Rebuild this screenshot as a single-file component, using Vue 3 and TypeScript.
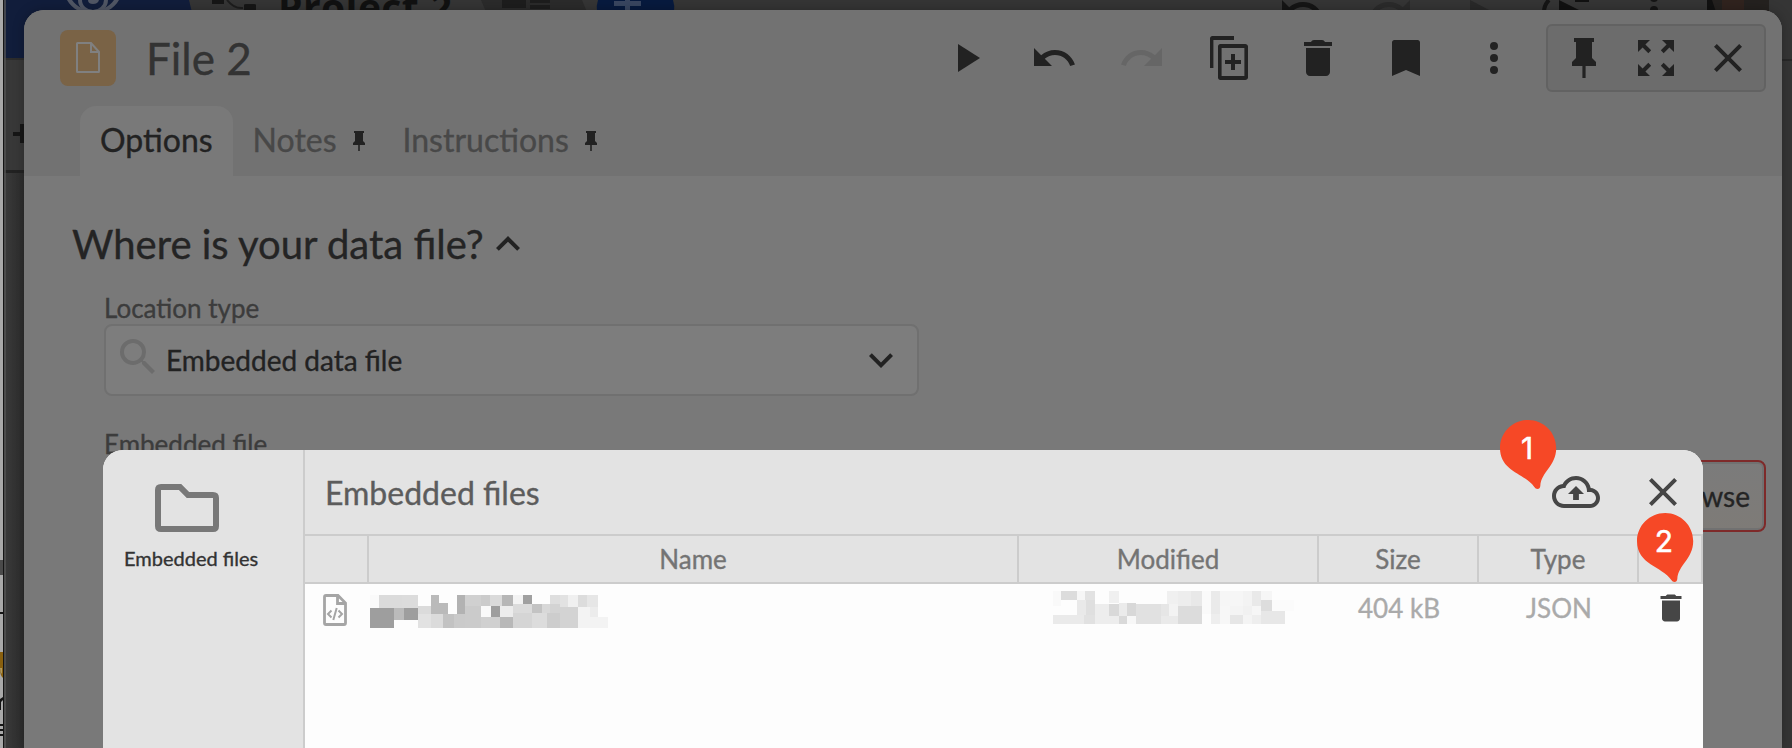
<script setup lang="ts">
import { reactive } from 'vue';

interface Icon {
  name: string;
  path: string;
  disabled?: boolean;
}

interface Tab {
  label: string;
  pinned: boolean;
}

// x, y, width, height, grey level
type Block = [number, number, number, number, number];

const pinPath = 'M16 12V4h1V2H7v2h1v8l-2 2v2h5.2v6h1.6v-6H18v-2z';
const closePath = 'M19 6.41L17.59 5 12 10.59 6.41 5 5 6.41 10.59 12 5 17.59 6.41 19 12 13.41 17.59 19 19 17.59 13.41 12z';
const deletePath = 'M6 19c0 1.1.9 2 2 2h8c1.1 0 2-.9 2-2V7H6v12zM19 4h-3.5c-.3-.6-.8-1-1.5-1h-4c-.7 0-1.2.4-1.5 1H5v2h14V4z';
const undoPath = 'M12.5 8c-2.65 0-5.05.99-6.9 2.6L2 7v9h9l-3.62-3.62c1.39-1.16 3.16-1.88 5.12-1.88 3.54 0 6.55 2.31 7.6 5.5l2.37-.78C21.08 11.03 17.15 8 12.5 8z';
const redoPath = 'M18.4 10.6C16.55 8.99 14.15 8 11.5 8c-4.65 0-8.58 3.03-9.96 7.22L3.9 16c1.05-3.19 4.05-5.5 7.6-5.5 1.95 0 3.73.72 5.12 1.88L13 16h9V7l-3.6 3.6z';
const cloudPath = 'M19.35 10.04C18.67 6.59 15.64 4 12 4 9.11 4 6.6 5.64 5.35 8.04 2.34 8.36 0 10.91 0 14c0 3.31 2.69 6 6 6h13c2.76 0 5-2.24 5-5 0-2.64-2.05-4.78-4.65-4.96zM19 18H6c-2.21 0-4-1.79-4-4s1.79-4 4-4h.71C7.37 7.69 9.48 6 12 6c3.04 0 5.5 2.46 5.5 5.5v.5H19c1.66 0 3 1.34 3 3s-1.34 3-3 3zM8 13h2.55v3h2.9v-3H16l-4-4z';

const actions: Icon[] = [
  { name: 'run', path: 'M8 5v14l11-7z' },
  { name: 'undo', path: undoPath },
  { name: 'redo', path: redoPath, disabled: true },
  { name: 'duplicate', path: 'M14 1H3.2C2.5 1 2 1.5 2 2.2V17h1.7V3H14V1zM19.6 5H7.2C6.5 5 6 5.5 6 6.2v15.6c0 .7.5 1.2 1.2 1.2h12.4c.7 0 1.4-.5 1.4-1.2V6.2C21 5.5 20.3 5 19.6 5zM19.2 21H7.8V7h11.4v14zM12.5 10h2v3h3v2h-3v3h-2v-3h-3v-2h3z' },
  { name: 'delete', path: deletePath },
  { name: 'bookmark', path: 'M17.8 3H6.2C5.5 3 5 3.5 5 4.2V21l7-3 7 3V4.2c0-.7-.5-1.2-1.2-1.2z' },
  { name: 'more', path: 'M12 8a2 2 0 1 0 0-4 2 2 0 0 0 0 4zm0 2a2 2 0 1 0 0 4 2 2 0 0 0 0-4zm0 6a2 2 0 1 0 0 4 2 2 0 0 0 0-4z' },
];

const windowActions: Icon[] = [
  { name: 'pin', path: pinPath },
  { name: 'expand', path: 'M15 3l2.3 2.3-2.89 2.87 1.42 1.42L18.7 6.7 21 9V3zM3 9l2.3-2.3 2.87 2.89 1.42-1.42L6.7 5.3 9 3H3zm6 12l-2.3-2.3 2.89-2.87-1.42-1.42L5.3 17.3 3 15v6zm12-6l-2.3 2.3-2.87-2.89-1.42 1.42 2.89 2.87L15 21h6z' },
  { name: 'close', path: closePath },
];

const tabs: Tab[] = [
  { label: 'Options', pinned: false },
  { label: 'Notes', pinned: true },
  { label: 'Instructions', pinned: true },
];

const columns = ['', 'Name', 'Modified', 'Size', 'Type', ''];

const state = reactive({ tab: 'Options', location: 'Embedded data file' });

const nameBlocks: Block[] = [
  [0, 0, 9, 13, 250], [9, 0, 23, 13, 219], [32, 0, 16, 13, 220], [0, 13, 24, 20, 158], [24, 13, 10, 12, 187], [34, 13, 14, 12, 158],
  [48, 11, 13, 8, 219], [48, 19, 13, 14, 226], [61, 0, 8, 19, 186], [69, 8, 9, 11, 186], [61, 19, 12, 14, 219],
  [73, 19, 11, 14, 194], [84, 19, 11, 14, 202], [87, 0, 8, 19, 178], [95, 0, 16, 11, 208], [95, 11, 16, 22, 203],
  [111, 0, 9, 11, 203], [120, 0, 12, 11, 218], [132, 0, 11, 11, 182], [111, 11, 10, 11, 249], [121, 11, 9, 11, 158],
  [130, 11, 13, 11, 236], [111, 22, 19, 11, 208], [130, 22, 13, 11, 184], [143, 0, 10, 9, 243], [153, 0, 9, 9, 160],
  [143, 9, 19, 9, 219], [162, 9, 10, 9, 195], [172, 9, 8, 9, 216], [143, 18, 19, 15, 213], [162, 18, 15, 15, 220],
  [177, 18, 13, 15, 205], [180, 0, 10, 9, 222], [190, 0, 8, 12, 226], [180, 9, 10, 9, 211], [198, 0, 10, 12, 240],
  [190, 12, 18, 21, 211], [208, 0, 9, 12, 220], [217, 0, 11, 12, 230], [208, 12, 12, 21, 243], [220, 12, 8, 10, 236],
  [220, 22, 18, 11, 243],
];

const dateBlocks: Block[] = [
  [0, 0, 8, 15, 249], [8, 0, 16, 9, 220], [24, 0, 8, 9, 246], [32, 0, 10, 9, 226], [24, 9, 9, 15, 233], [33, 9, 9, 15, 223],
  [0, 24, 31, 9, 234], [31, 24, 11, 9, 225], [42, 13, 14, 20, 237], [56, 0, 10, 12, 240], [56, 13, 10, 12, 217],
  [56, 25, 10, 8, 237], [66, 12, 8, 13, 235], [66, 25, 8, 8, 217], [74, 12, 9, 13, 216], [74, 25, 9, 8, 247],
  [83, 13, 25, 20, 225], [108, 13, 8, 12, 230], [116, 13, 9, 12, 243], [108, 25, 17, 8, 234], [114, 0, 11, 13, 240],
  [125, 0, 13, 15, 237], [138, 0, 11, 15, 232], [125, 15, 24, 18, 220], [149, 0, 9, 23, 250], [158, 0, 9, 23, 234],
  [158, 23, 9, 10, 238], [167, 0, 23, 15, 246], [167, 15, 10, 18, 247], [190, 0, 9, 15, 243], [177, 15, 13, 9, 244],
  [177, 24, 13, 9, 230], [190, 15, 9, 9, 241], [190, 24, 9, 9, 244], [199, 0, 9, 15, 233], [208, 0, 11, 9, 246],
  [199, 15, 9, 9, 246], [199, 24, 9, 9, 238], [208, 9, 11, 11, 221], [219, 9, 22, 11, 251], [208, 20, 24, 13, 231],
];

const fill = (grey: number) => `rgb(${grey}, ${grey}, ${grey})`;
</script>

<template>
  <div class="screen">
    <!-- dimmed project window behind the editor -->
    <svg class="backdrop" width="1792" height="748" viewBox="0 0 1792 748">
      <defs>
        <linearGradient id="rail" x1="0" x2="1" y1="0" y2="0">
          <stop offset="0" stop-color="#393939" />
          <stop offset="1" stop-color="#2d2d2d" />
        </linearGradient>
      </defs>
      <rect width="1792" height="748" fill="#353535" />
      <path d="M4 0H189L203 58H4z" fill="#111d3b" />
      <path d="M4 58h22v2H4z" fill="#2c2c2c" />
      <rect x="4" y="60" width="20" height="110" fill="#383838" />
      <rect x="4" y="170" width="20" height="3" fill="#222" />
      <rect x="5" y="173" width="19" height="575" fill="url(#rail)" />
      <path d="M13 132h7v-8h4v19h-4v-7h-7z" fill="#161616" />
      <path d="M67 0c5 9 15 14 26 14s21-5 26-14h-5c-5 7-12 10-21 10S77 7 72 0z" fill="#515765" />
      <path d="M80 0a13 12 0 0 0 26 0" fill="none" stroke="#515765" stroke-width="4" />
      <path d="M88 0h11q-1 4-6 4t-5-4z" fill="#515765" />
      <path d="M212 0h12v4h-12zM244 5q0-1 2-1h8q2 0 2 1v6h-12z" fill="#161616" />
      <path d="M227 0q7 9 16 8" fill="none" stroke="#1d1d1d" stroke-width="2" />
      <text x="278" y="22" class="project" textLength="174">Project 2</text>
      <path d="M481 0h101l5 12H486z" fill="#2b2b2b" />
      <path d="M502 0h24v8h-24zM530 0h20v3h-20zM530 5h20v4h-20z" fill="#1d1d1d" />
      <path d="M597 12q-1-6 1-12h75q2 6 1 12z" fill="#071a3e" />
      <path d="M614 1h27v5h-27zM625 0h5v12h-5z" fill="#394660" />
      <svg x="1278" y="-14" width="48" height="48" viewBox="0 0 24 24"><path :d="undoPath" fill="#151515" /></svg>
      <svg x="1366" y="-14" width="48" height="48" viewBox="0 0 24 24"><path :d="redoPath" fill="#2b2b2b" /></svg>
      <path d="M1470 0l21 11h-21z" fill="#292929" />
      <path d="M1544 12q0-7 5-12" fill="none" stroke="#151515" stroke-width="4" />
      <path d="M1559 0l20 10h-20zM1575 0h14v2h-14z" fill="#111" />
      <circle cx="1654" cy="-2" r="4" fill="#151515" />
      <circle cx="1654" cy="10" r="4" fill="#151515" />
      <path d="M1707 0h62v12h-62z" fill="#24211f" />
      <path d="M1722 0h22v12h-22z" fill="#30231e" />
      <path d="M1707 0h5l4 12h-9z" fill="#111" />
      <path d="M1782 59h10v2h-10z" fill="#282828" />
      <path d="M0 0h3v748H0z" fill="#a9a9a9" />
      <path d="M3 0h1v748H3z" fill="#151515" />
      <path d="M4 0h2v748H4z" fill="#555" fill-opacity=".7" />
      <path d="M0 560h3v15H0z" fill="#4a4a4a" />
      <path d="M0 612h3v2H0z" fill="#151515" />
      <path d="M0 652h3v26q-3-3-3-8z" fill="#89600f" />
      <path d="M0 668h2v6q-2-2-2-6z" fill="#b09a60" />
      <path d="M0 699l3-2v3l-2 2v8H0zM0 724h3v2H0zM0 729h3v2H0zM0 734h3v2H0z" fill="#151515" />
    </svg>

    <section class="editor">
      <header class="editor-head">
        <div class="title-bar">
          <div class="file-badge">
            <svg width="28" height="34" viewBox="0 0 28 34">
              <path d="M3.5 2H17l8 9v19.5q0 .5-.5.5h-21q-.5 0-.5-.5v-28q0-.5.5-.5zM17 2v9h8" fill="none" stroke="#808080" stroke-width="2" />
            </svg>
          </div>
          <h1>File 2</h1>
          <div class="actions">
            <button v-for="a in actions" :key="a.name" :class="{ disabled: a.disabled }" :aria-label="a.name">
              <svg viewBox="0 0 24 24"><path :d="a.path" /></svg>
            </button>
          </div>
          <div class="window-actions">
            <button v-for="a in windowActions" :key="a.name" :aria-label="a.name">
              <svg viewBox="0 0 24 24"><path :d="a.path" /></svg>
            </button>
          </div>
        </div>
        <nav class="tabs">
          <div v-for="t in tabs" :key="t.label" class="tab" :class="{ active: t.label === state.tab }" @click="state.tab = t.label">
            <span>{{ t.label }}</span>
            <svg v-if="t.pinned" viewBox="0 0 24 24"><path :d="pinPath" /></svg>
          </div>
        </nav>
      </header>

      <div class="editor-body">
        <h2>
          <span>Where is your data file?</span>
          <svg viewBox="0 0 24 24"><path d="M12 8l-6 6 1.41 1.41L12 10.83l4.59 4.58L18 14z" /></svg>
        </h2>
        <label>Location type</label>
        <div class="select">
          <svg class="search" viewBox="0 0 24 24">
            <path d="M15.5 14h-.79l-.28-.27A6.471 6.471 0 0 0 16 9.5 6.5 6.5 0 1 0 9.5 16c1.61 0 3.09-.59 4.23-1.57l.27.28v.79l5 4.99L20.49 19l-4.99-5zm-6 0C7.01 14 5 11.99 5 9.5S7.01 5 9.5 5 14 7.01 14 9.5 11.99 14 9.5 14z" />
          </svg>
          <span>{{ state.location }}</span>
          <svg class="arrow" viewBox="0 0 24 24"><path d="M7.41 8.6L12 13.2l4.59-4.6L18 10l-6 6-6-6z" /></svg>
        </div>
        <label class="second">Embedded file</label>
        <div class="browse-row">
          <button class="browse">Browse</button>
        </div>
      </div>
    </section>

    <section class="dialog">
      <aside>
        <svg width="64" height="48" viewBox="0 0 64 48">
          <path d="M6 3H25L33 11H58Q61 11 61 14V42Q61 45 58 45H6Q3 45 3 42V6Q3 3 6 3z" fill="none" stroke="#787878" stroke-width="6" />
        </svg>
        <span>Embedded files</span>
      </aside>
      <div class="dialog-main">
        <header>
          <h3>Embedded files</h3>
          <div class="dialog-actions">
            <button aria-label="upload"><svg viewBox="0 0 24 24"><path :d="cloudPath" /></svg></button>
            <button aria-label="close"><svg viewBox="0 0 24 24"><path :d="closePath" /></svg></button>
          </div>
        </header>
        <div class="grid grid-head">
          <div v-for="(c, i) in columns" :key="i">{{ c }}</div>
        </div>
        <div class="grid grid-row">
          <div class="type-cell">
            <svg width="24" height="32" viewBox="0 0 24 32">
              <path d="M3 1.5H15L22.5 9V29Q22.5 30.5 21 30.5H3Q1.5 30.5 1.5 29V3Q1.5 1.5 3 1.5zM14.5 2V9.5H22" fill="none" stroke="#a5a5a5" stroke-width="2.8" />
              <path d="M8.5 16.500L5 20l3.500 3.500M15.500 16.500L19 20l-3.500 3.500M13.700 14L10.300 26" fill="none" stroke="#a5a5a5" stroke-width="2" />
            </svg>
          </div>
          <div class="name-cell">
            <svg width="238" height="33" shape-rendering="crispEdges">
              <rect v-for="(b, i) in nameBlocks" :key="i" :x="b[0]" :y="b[1]" :width="b[2]" :height="b[3]" :fill="fill(b[4])" />
            </svg>
          </div>
          <div class="date-cell">
            <svg width="241" height="33" shape-rendering="crispEdges">
              <rect v-for="(b, i) in dateBlocks" :key="i" :x="b[0]" :y="b[1]" :width="b[2]" :height="b[3]" :fill="fill(b[4])" />
            </svg>
          </div>
          <div>404 kB</div>
          <div>JSON</div>
          <div class="delete-cell"><svg viewBox="0 0 24 24"><path :d="deletePath" /></svg></div>
        </div>
      </div>
    </section>

    <div v-for="n in 2" :key="n" class="callout" :class="'callout-' + n">
      <svg width="57" height="70" viewBox="0 0 57 70">
        <path d="M28.2 0C43.8 0 56.2 12.6 56.2 28C56.2 46 41 52 40.3 66Q40 69 37.5 69Q35.5 69 34.3 67C25 53 0 52 0 28C0 12.6 12.6 0 28.2 0z" fill="#f64826" />
      </svg>
      <span>{{ n }}</span>
    </div>
  </div>
</template>

<style>
body {
  margin: 0;
  overflow: hidden;
}
</style>

<style scoped>
.screen {
  position: relative;
  width: 1792px;
  height: 748px;
  overflow: hidden;
  font-family: Lato, "Liberation Sans", sans-serif;
  color: #242424;
  -webkit-text-stroke: 0.35px currentColor;
}

.backdrop {
  position: absolute;
  top: 0;
  left: 0;
}

.project {
  font: bold 39px "Open Sans", "Noto Sans", sans-serif;
  fill: #111;
  -webkit-text-stroke: 0;
}

h1, h2, h3 {
  margin: 0;
  font-weight: 400;
}

button {
  margin: 0;
  padding: 0;
  border: 0;
  background: none;
  font-family: inherit;
  color: inherit;
}

.editor {
  position: absolute;
  top: 10px;
  left: 24px;
  width: 1758px;
  height: 738px;
  border-radius: 20px 20px 0 0;
  background: #797979;
  overflow: hidden;
  box-shadow: 0 0 12px rgba(0, 0, 0, 0.25);
}

.editor-head {
  height: 166px;
  background: #727272;
}

.title-bar {
  display: flex;
  align-items: center;
  height: 96px;
  padding: 0 16px 0 36px;
}

.file-badge {
  display: flex;
  align-items: center;
  justify-content: center;
  width: 56px;
  height: 56px;
  border-radius: 8px;
  background: #7a6346;
}

.title-bar h1 {
  margin-left: 30px;
  font-size: 44px;
  line-height: 56px;
  color: #333;
}

.actions {
  display: flex;
  gap: 40px;
  margin-left: auto;
}

.actions button,
.window-actions button {
  width: 48px;
  height: 48px;
}

.title-bar button svg {
  display: block;
  width: 48px;
  height: 48px;
  fill: #222;
}

.title-bar .disabled svg {
  fill: #666;
}

.window-actions {
  display: flex;
  align-items: center;
  gap: 24px;
  height: 64px;
  margin-left: 28px;
  padding: 0 12px;
  border: 2px solid #626262;
  border-radius: 6px;
  background: #6c6c6c;
}

.tabs {
  display: flex;
  height: 70px;
  padding-left: 56px;
}

.tab {
  display: flex;
  align-items: center;
  padding: 0 20px;
  border-radius: 16px 16px 0 0;
  font-size: 32px;
  color: #484848;
}

.tab span {
  line-height: 66px;
  padding-bottom: 3px;
}

.tab.active {
  background: #797979;
  color: #222;
}

.tab svg {
  width: 24px;
  height: 24px;
  margin-left: 10px;
  margin-right: -8px;
  fill: #222;
}

.editor-body {
  display: flex;
  flex-direction: column;
  padding: 42px 16px 0 80px;
}

.editor-body h2 {
  display: flex;
  align-items: center;
  height: 52px;
  margin-left: -32px;
  font-size: 40px;
  line-height: 52px;
}

.editor-body h2 svg {
  width: 48px;
  height: 48px;
  fill: #222;
}

.editor-body label {
  height: 32px;
  margin-top: 22px;
  font-size: 26px;
  line-height: 32px;
  color: #3c3c3c;
}

.select {
  display: flex;
  align-items: center;
  width: 811px;
  height: 68px;
  border: 2px solid #707070;
  border-radius: 8px;
  background: #7d7d7d;
  font-size: 28px;
  color: #222;
}

.select svg {
  width: 48px;
  height: 48px;
}

.search {
  margin: -6px 4px 0 8px;
  fill: #6c6c6c;
}

.arrow {
  margin-left: auto;
  margin-right: 12px;
  fill: #222;
}

.editor-body .second {
  margin-top: 32px;
}

.browse-row {
  display: flex;
  justify-content: flex-end;
}

.browse {
  width: 156px;
  height: 72px;
  border: 2px solid #7e2a2a;
  border-radius: 8px;
  background: linear-gradient(#7b7b7b, #7e7b77);
  box-shadow: inset 0 0 0 2px #717171;
  text-align: right;
  padding-right: 14px;
  font-size: 28px;
}

.dialog {
  position: absolute;
  top: 450px;
  left: 103px;
  display: flex;
  width: 1600px;
  height: 298px;
  border-radius: 20px 20px 0 0;
  background: #fdfdfd;
  overflow: hidden;
}

aside {
  display: flex;
  flex-direction: column;
  width: 179px;
  padding: 34px 0 0 21px;
  border-right: 2px solid #ccc;
  background: #e3e3e3;
  font-size: 20px;
  color: #333;
}

aside svg {
  margin-left: 31px;
}

aside span {
  margin-top: 14px;
  line-height: 24px;
}

.dialog-main {
  flex: 1;
}

.dialog-main header {
  display: flex;
  align-items: center;
  justify-content: space-between;
  height: 84px;
  padding: 0 16px 0 20px;
  border-bottom: 2px solid #ccc;
  background: #e3e3e3;
}

.dialog-main h3 {
  padding-top: 2px;
  font-size: 32px;
  line-height: 40px;
  color: #5c5c5c;
}

.dialog-actions {
  display: flex;
  gap: 39px;
}

.dialog-actions svg {
  display: block;
  width: 48px;
  height: 48px;
  fill: #464646;
}

.grid {
  display: grid;
  grid-template-columns: 64px 650px 300px 160px 160px 64px;
  font-size: 26px;
  text-align: center;
}

.grid-head {
  height: 46px;
  border-bottom: 2px solid #ccc;
  background: #e3e3e3;
  line-height: 46px;
  color: #747474;
}

.grid-head div {
  border-right: 2px solid #ccc;
}

.grid-row {
  height: 48px;
  line-height: 49px;
  color: #aaa;
}

.grid-row svg {
  display: block;
}

.type-cell {
  padding: 10px 0 0 18px;
}

.name-cell {
  padding: 11px 0 0 1px;
}

.date-cell {
  padding: 7px 0 0 34px;
}

.delete-cell svg {
  width: 36px;
  height: 36px;
  margin: 6px 0 0 14px;
  fill: #464646;
}

.callout {
  position: absolute;
  width: 57px;
  height: 70px;
}

.callout svg {
  display: block;
}

.callout span {
  position: absolute;
  top: 10px;
  left: 0;
  width: 55px;
  text-align: center;
  font: 400 30px/36px Inter, sans-serif;
  color: #fff;
  -webkit-text-stroke: 0.5px #fff;
}

.callout-1 {
  top: 420px;
  left: 1499.5px;
}

.callout-2 {
  top: 513px;
  left: 1636.5px;
}
</style>
